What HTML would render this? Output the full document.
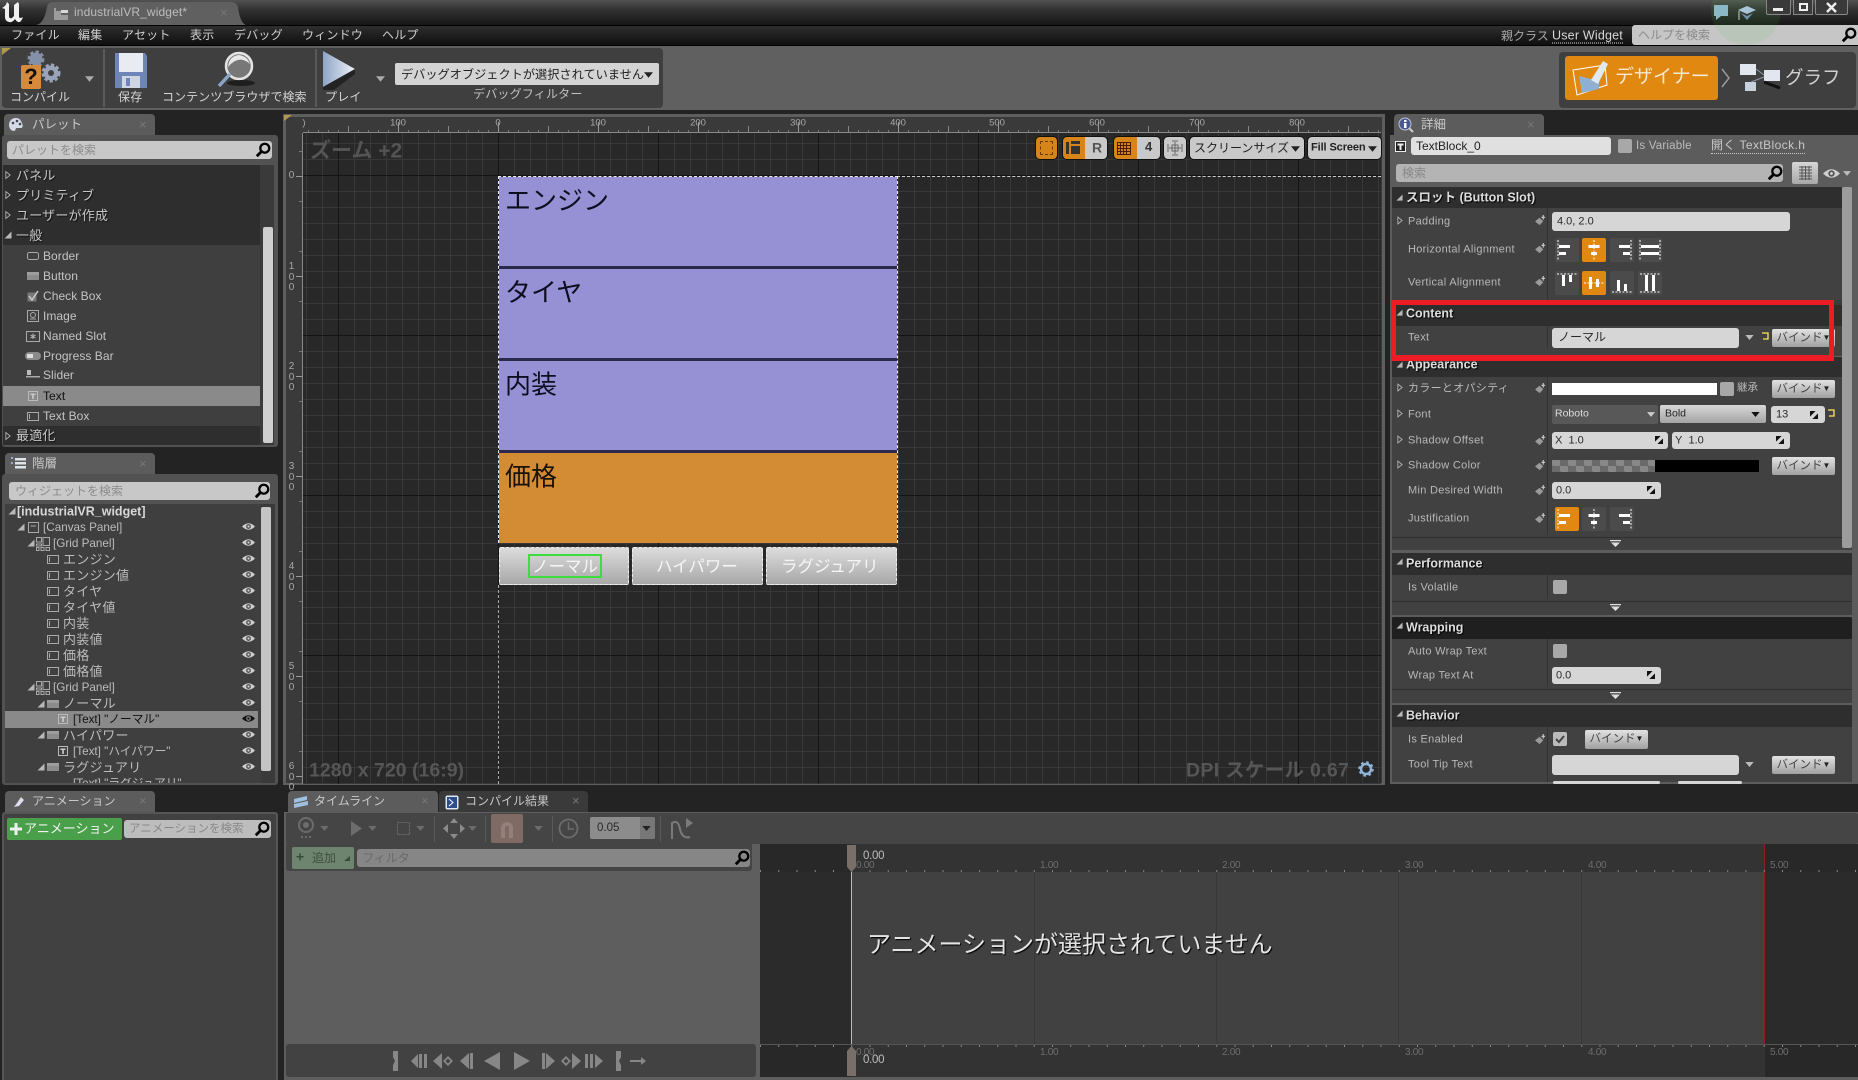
<!DOCTYPE html>
<html lang="ja"><head><meta charset="utf-8"><title>industrialVR_widget</title>
<style>
*{box-sizing:border-box;margin:0;padding:0}
html,body{width:1858px;height:1080px;overflow:hidden;background:#232323}
body{position:relative;font-family:"Liberation Sans","Noto Sans CJK JP",sans-serif;color:#c8c8c8}
div,svg{position:absolute}
.t{position:absolute;white-space:nowrap;transform:translateY(-50%);line-height:1.2}
.m{font-size:12px;color:#cfcfcf;letter-spacing:.2px}
.tab{background:#5c5c5c;border-radius:4px 4px 0 0;height:21px;top:114px}
.panel{background:#525252;border-radius:3px}
.inp{background:#c8c8c8;border-radius:3px}
.x{color:#777;font-size:13px}
.p{font-size:13px;color:#c6c6c6;letter-spacing:.2px;text-shadow:1px 1px 1px #111;transform:translateY(calc(-50% + 1px))}
.i{font-size:12px;color:#c4c4c4;letter-spacing:.05px}
.h{font-size:13px;color:#bcbcbc;letter-spacing:.25px;transform:translateY(calc(-50% + 1px))}
.h2{font-size:11.700px;letter-spacing:0}
.l{font-size:11px;color:#b8b8b8;letter-spacing:.3px;left:1408px;transform:translateY(calc(-50% + 1px))}
.s{font-size:12.5px;color:#dcdcdc;font-weight:bold;left:1406px;text-shadow:1px 1px 1px #000}
.sec{left:1392px;width:450px;background:#2e2e2e;border-radius:2px 2px 0 0}
.row{left:1392px;width:450px;background:#414141}
.f{background:#d6d6d6;border-radius:3px}
.v{font-size:11px;color:#2a2a2a}
.b{background:linear-gradient(#e2e2e2,#a0a0a0);border-radius:2px;width:63px;height:18px;color:#444;font-size:11.5px;text-align:center;line-height:18px;white-space:nowrap}
.b span{font-size:8px;color:#222;vertical-align:1px}
.ab{width:24px;height:24px;background:#4b4b4b;border-radius:2px}
.on{background:#e0880f}
.rul{font-size:9.5px;color:#a8a8a8;transform:translate(-50%,-50%)}
.vr{font-size:10px;color:#a8a8a8;left:288px;width:7px;text-align:center;line-height:10.5px;white-space:normal}
.ico{fill:none;stroke:#aaa}
.vb{background:#c9c9c9;top:136px;height:24px;border:1px solid #111;border-radius:5px;color:#222}
.tm{font-size:10px;color:#6e6e6e;letter-spacing:-.3px}
</style></head><body>
<svg width="0" height="0" style="position:absolute"><defs>
<symbol id="mag" viewBox="0 0 18 18"><circle cx="11" cy="7" r="5" fill="none" stroke="#000" stroke-width="2.6"/><path d="M7 11L2 16" stroke="#000" stroke-width="3.2"/></symbol>
<symbol id="eye" viewBox="0 0 16 10"><path d="M0 5Q8-3 16 5Q8 13 0 5Z" fill="#cfcfcf"/><circle cx="8" cy="5" r="3" fill="#555"/><circle cx="8" cy="5" r="1.3" fill="#ddd"/></symbol>
<symbol id="eyeb" viewBox="0 0 16 10"><path d="M0 5Q8-3 16 5Q8 13 0 5Z" fill="#111"/><circle cx="8" cy="5" r="3" fill="#777"/><circle cx="8" cy="5" r="1.3" fill="#111"/></symbol>
<symbol id="open" viewBox="0 0 8 8"><path d="M7.5 .5V7.5H.5Z" fill="#b8b8b8"/></symbol>
<symbol id="clo" viewBox="0 0 7 10"><path d="M1 1L6 5L1 9Z" fill="none" stroke="#b8b8b8"/></symbol>
<symbol id="key" viewBox="0 0 12 12"><path d="M0 7L5 3L9 7L5 11Z" fill="#9a9a9a"/><path d="M9 0V5M7 2.500H11" stroke="#ccc" stroke-width="1.200"/></symbol>
<symbol id="spin" viewBox="0 0 10 10"><path d="M0 0H7L0 7Z" fill="#111"/><path d="M10 10H3L10 3Z" fill="#111"/></symbol>
<symbol id="hl" viewBox="0 0 24 24"><path d="M3 2V22" stroke="#fff" stroke-dasharray="2 1.500"/><path d="M4 7H15V10H4ZM4 14H11V17H4Z" fill="#fff"/></symbol>
<symbol id="hc" viewBox="0 0 24 24"><path d="M12 2V22" stroke="#fff" stroke-dasharray="2 1.500"/><path d="M6.500 7H17.500V10H6.500ZM9 14H15V17H9Z" fill="#fff"/></symbol>
<symbol id="hr" viewBox="0 0 24 24"><path d="M21 2V22" stroke="#fff" stroke-dasharray="2 1.500"/><path d="M9 7H20V10H9ZM13 14H20V17H13Z" fill="#fff"/></symbol>
<symbol id="hf" viewBox="0 0 24 24"><path d="M2 2V22M22 2V22" stroke="#fff" stroke-dasharray="2 1.500"/><path d="M3 7H21V10H3ZM3 14H21V17H3Z" fill="#fff"/></symbol>
<symbol id="vt" viewBox="0 0 24 24"><path d="M2 3H22" stroke="#fff" stroke-dasharray="2 1.500"/><path d="M7 4H10V15H7ZM14 4H17V11H14Z" fill="#fff"/></symbol>
<symbol id="vc" viewBox="0 0 24 24"><path d="M2 12H22" stroke="#fff" stroke-dasharray="2 1.500"/><path d="M7 6H10V18H7ZM14 8H17V16H14Z" fill="#fff"/></symbol>
<symbol id="vb" viewBox="0 0 24 24"><path d="M2 21H22" stroke="#fff" stroke-dasharray="2 1.500"/><path d="M7 9H10V20H7ZM14 13H17V20H14Z" fill="#fff"/></symbol>
<symbol id="vf" viewBox="0 0 24 24"><path d="M2 3H22M2 21H22" stroke="#fff" stroke-dasharray="2 1.500"/><path d="M7 4H10V20H7ZM14 4H17V20H14Z" fill="#fff"/></symbol>
<symbol id="rect" viewBox="0 0 12 9"><rect x=".5" y=".5" width="11" height="8" fill="none" stroke="#aaa"/><path d="M2.500 2V7" stroke="#aaa"/></symbol>
<symbol id="btn" viewBox="0 0 12 8"><rect width="12" height="8" fill="#8c8c8c"/><rect width="12" height="3" fill="#9e9e9e"/></symbol>
<symbol id="ti" viewBox="0 0 10 10"><rect x=".5" y=".5" width="9" height="9" fill="none" stroke="#bbb"/><path d="M2.500 2.500H7.500V4H5.800V8H4.200V4H2.500Z" fill="#ccc"/></symbol>
<symbol id="grid" viewBox="0 0 14 14"><path d="M.5 .5H5.500V5H.5ZM7 .5H13.500V8.500H7ZM.5 7H5.500V9H.5ZM.5 10.500H3V13.500H.5ZM5 10.500H8V13.500H5ZM10 10.500H13.500V13.500H10Z" fill="none" stroke="#aaa"/></symbol>
<symbol id="arr" viewBox="0 0 10 6"><path d="M0 0H10L5 6Z"/></symbol>
</defs></svg>

<!-- title bar -->
<div style="left:0;top:0;width:1858px;height:25px;background:linear-gradient(#525252,#343434 35%,#161616)"></div>
<svg style="left:1px;top:1px" width="24" height="23" viewBox="0 0 24 23"><path d="M1 7Q5 5 6 1L8 3V15Q8 18 11 17L13 15V4L17 1L18 3V16Q19 18 22 16Q20 22 17 21Q15 20 14 18Q11 22 8 21Q4 20 4 16V8Z" fill="#f0f0f0"/></svg>
<svg style="left:36px;top:1px" width="210" height="24"><path d="M0 24Q8 23 11 6Q12 1 17 1H195Q200 1 202 6Q204 22 210 24Z" fill="#606060"/></svg>
<svg style="left:53px;top:7px" width="16" height="14" viewBox="0 0 16 14"><path d="M1 1V13H15V8H8V4H3V1Z" fill="#9c9c9c"/><path d="M8 3H15V6H8Z" fill="#d8d8d8"/></svg>
<div class="t" style="left:74px;top:11.500px;font-size:12px;color:#bdbdbd;letter-spacing:.12px">industrialVR_widget*</div>
<div class="t x" style="left:220px;top:13px">×</div>
<!-- menu -->
<div style="left:0;top:25px;width:1858px;height:21px;background:linear-gradient(#2e2e2e,#0f0f0f);border-top:1px solid #000;border-bottom:1px solid #000"></div>
<div class="t m" style="left:11px;top:35px">ファイル</div>
<div class="t m" style="left:78px;top:35px">編集</div>
<div class="t m" style="left:122px;top:35px">アセット</div>
<div class="t m" style="left:190px;top:35px">表示</div>
<div class="t m" style="left:234px;top:35px">デバッグ</div>
<div class="t m" style="left:302px;top:35px">ウィンドウ</div>
<div class="t m" style="left:382px;top:35px">ヘルプ</div>
<div class="t" style="left:1501px;top:36px;font-size:12px;color:#a8a8a8">親クラス</div>
<div class="t" style="left:1552px;top:36px;font-size:12.5px;color:#d8d8d8;border-bottom:1px dotted #ddd;line-height:14px;letter-spacing:.2px">User Widget</div>
<div class="inp" style="left:1632px;top:25px;width:226px;height:20px;background:#c6c6c6;border-radius:3px 0 0 3px"></div>
<div class="t" style="left:1638px;top:35px;font-size:12px;color:#8a8a8a">ヘルプを検索</div>
<svg style="left:1841px;top:27px" width="16" height="16"><use href="#mag"/></svg>
<div style="left:1711px;top:-25px;width:70px;height:70px;border-radius:50%;background:rgba(90,200,90,.1)"></div>
<svg style="left:1713px;top:4px" width="16" height="17" viewBox="0 0 16 17"><path d="M1 1H15V12H8L3 16V12H1Z" fill="#8ab8c6"/></svg>
<svg style="left:1738px;top:5px" width="18" height="16" viewBox="0 0 18 16"><path d="M0 5L9 1L18 5L9 9Z" fill="#a9c4d8"/><path d="M3 8L9 11L15 8L9 15Z" fill="#6f93ac"/><path d="M1 6V15" stroke="#ccc"/></svg>
<div style="left:1766px;top:0;width:25px;height:15px;background:#3a3a3a;border:1px solid #888;border-top:0;border-radius:0 0 2px 2px"></div>
<div style="left:1773px;top:8px;width:10px;height:3px;background:#eee"></div>
<div style="left:1793px;top:0;width:20px;height:15px;background:#3a3a3a;border:1px solid #888;border-top:0"></div>
<div style="left:1799px;top:3px;width:9px;height:8px;border:2px solid #eee"></div>
<div style="left:1815px;top:0;width:33px;height:15px;background:#3a3a3a;border:1px solid #888;border-top:0;border-radius:0 0 2px 2px"></div>
<svg style="left:1826px;top:2px" width="11" height="11"><path d="M1 1L10 10M10 1L1 10" stroke="#eee" stroke-width="2.400"/></svg>

<!-- toolbar strip -->
<div style="left:0;top:46px;width:1858px;height:64px;background:#606060"></div>
<div style="left:2px;top:48px;width:661px;height:60px;background:#3f3f3f;border-radius:4px"></div>
<svg style="left:2px;top:48px" width="10" height="8"><path d="M0 0H9L0 7Z" fill="#b09a48"/></svg>
<div style="left:103px;top:49px;width:2px;height:58px;background:#5a5a5a"></div>
<div style="left:315px;top:49px;width:2px;height:58px;background:#5a5a5a"></div>
<!-- compile -->
<svg style="left:20px;top:49px" width="42" height="42" viewBox="0 0 42 42"><circle cx="16" cy="10" r="6.500" fill="#8390a8" stroke="#8390a8" stroke-width="4" stroke-dasharray="3 2"/><circle cx="31" cy="24" r="7.500" fill="#9aa4b8" stroke="#9aa4b8" stroke-width="4" stroke-dasharray="3 2"/><circle cx="31" cy="24" r="3" fill="#3f3f3f"/><rect x="1" y="16" width="20" height="24" rx="2" fill="#d58a3c"/><text x="11" y="35" text-anchor="middle" font-size="22" font-weight="bold" fill="#111" font-family="Liberation Sans">?</text></svg>
<div class="t m" style="left:10px;top:97px;font-size:12px;color:#d4d4d4;letter-spacing:0">コンパイル</div>
<svg style="left:85px;top:76px" width="9" height="6" fill="#aaa"><use href="#arr"/></svg>
<!-- save -->
<svg style="left:114px;top:52px" width="34" height="37" viewBox="0 0 34 37"><path d="M1 1H31L33 4V36H1Z" fill="#6f85b8"/><rect x="5" y="1" width="24" height="19" fill="#e8ecf2"/><rect x="8" y="24" width="18" height="12" fill="#cfd6e2"/><rect x="12" y="26" width="4" height="8" fill="#6f85b8"/></svg>
<div class="t m" style="left:118px;top:97px;color:#d4d4d4">保存</div>
<!-- browse -->
<svg style="left:215px;top:50px" width="42" height="40" viewBox="0 0 42 40"><circle cx="24" cy="16" r="13" fill="#777" stroke="#e4e4e4" stroke-width="2.500"/><path d="M13 17Q24 4 35 14Q32 6 24 5Q14 6 13 17Z" fill="#e8e8e8"/><path d="M15 24L4 36" stroke="#8aa5c8" stroke-width="3.500"/><ellipse cx="26" cy="33" rx="14" ry="3" fill="#111" opacity=".7"/></svg>
<div class="t m" style="left:162px;top:97px;color:#d4d4d4;letter-spacing:.05px">コンテンツブラウザで検索</div>
<!-- play -->
<svg style="left:322px;top:50px" width="34" height="40" viewBox="0 0 34 40"><defs><linearGradient id="pg" x1="0" y1="0" x2="1" y2="0"><stop offset="0" stop-color="#8ea4c6"/><stop offset="1" stop-color="#eef2f8"/></linearGradient></defs><path d="M1 1L33 19L1 37Z" fill="url(#pg)"/><path d="M1 37L33 19V24L12 40H1Z" fill="#111" opacity=".6"/></svg>
<div class="t m" style="left:325px;top:97px;color:#d4d4d4">プレイ</div>
<svg style="left:376px;top:76px" width="9" height="6" fill="#aaa"><use href="#arr"/></svg>
<div style="left:395px;top:63px;width:264px;height:22px;background:#d4d4d4;border-radius:2px"></div>
<div class="t" style="left:401px;top:75px;font-size:12.2px;color:#222">デバッグオブジェクトが選択されていません</div>
<svg style="left:644px;top:72px" width="9" height="6" fill="#222"><use href="#arr"/></svg>
<div class="t m" style="left:473px;top:94px;color:#c0c0c0">デバッグフィルター</div>
<!-- designer -->
<div style="left:1559px;top:52px;width:297px;height:56px;background:#3f3f3f;border-radius:4px"></div>
<div style="left:1565px;top:56px;width:153px;height:44px;background:#e0880f;border-radius:3px"></div>
<svg style="left:1571px;top:57px" width="40" height="40" viewBox="0 0 40 40"><path d="M2 13L34 8L36 28L6 38Z" fill="none" stroke="#fff"/><path d="M8 19L28 24L28 32L11 36Z" fill="#8fb0d4"/><path d="M20 23L32 4L37 7L27 27Z" fill="#dfe8f4"/></svg>
<div class="t" style="left:1615px;top:78px;font-size:19px;color:#f4e8d6">デザイナー</div>
<svg style="left:1721px;top:68px" width="10" height="20"><path d="M1 1L8 10L1 19" fill="none" stroke="#9a9a9a" stroke-width="1.500"/></svg>
<svg style="left:1739px;top:62px" width="42" height="32" viewBox="0 0 42 32"><rect x="1" y="2" width="16" height="11" fill="#e2e6ee"/><rect x="25" y="8" width="16" height="11" fill="#e2e6ee"/><rect x="6" y="20" width="11" height="9" fill="#c8d0dc"/><path d="M17 7L25 13M12 20L25 15" stroke="#8a9ab0"/><path d="M25 20L41 26" stroke="#111" stroke-width="3"/></svg>
<div class="t" style="left:1785px;top:78px;font-size:18.500px;color:#d0d0d0">グラフ</div>

<!-- palette -->
<div class="tab" style="left:4px;width:151px"></div>
<svg style="left:8px;top:117px" width="16" height="15" viewBox="0 0 16 15"><path d="M8 1C3 1 1 5 1 8S3 14 6 14C8 14 7 11 9 11H13C15 11 15 8 14 6S12 1 8 1Z" fill="#d4dbe6"/><circle cx="5" cy="6" r="1.300" fill="#445"/><circle cx="9" cy="4" r="1.300" fill="#445"/><circle cx="12" cy="7" r="1.300" fill="#445"/></svg>
<div class="t" style="left:32px;top:125px;font-size:12.500px;color:#c8c8c8">パレット</div>
<div class="t x" style="left:139px;top:125px">×</div>
<div class="panel" style="left:2px;top:135px;width:276px;height:312px"></div>
<div class="inp" style="left:7px;top:141px;width:265px;height:18px"></div>
<div class="t" style="left:12px;top:150px;font-size:12px;color:#8c8c8c">パレットを検索</div>
<svg style="left:255px;top:142px" width="16" height="16"><use href="#mag"/></svg>
<div style="left:3px;top:165px;width:257px;height:280px;background:#2e2e2e"></div>
<div style="left:3px;top:245px;width:257px;height:181px;background:#3f3f3f"></div>
<div style="left:3px;top:386px;width:257px;height:20px;background:#8a8a8a"></div>
<div style="left:260px;top:165px;width:14px;height:280px;background:#3a3a3a"></div>
<div style="left:263px;top:227px;width:10px;height:216px;background:#cfcfcf;border-radius:2px"></div>
<svg style="left:5px;top:170px" width="6" height="10"><use href="#clo"/></svg><div class="t p" style="left:16px;top:175px">パネル</div>
<svg style="left:5px;top:190px" width="6" height="10"><use href="#clo"/></svg><div class="t p" style="left:16px;top:195px">プリミティブ</div>
<svg style="left:5px;top:210px" width="6" height="10"><use href="#clo"/></svg><div class="t p" style="left:16px;top:215px">ユーザーが作成</div>
<svg style="left:4px;top:231px" width="8" height="8"><use href="#open"/></svg><div class="t p" style="left:16px;top:235px">一般</div>
<svg style="left:27px;top:252px" width="12" height="8"><rect x=".5" y=".5" width="11" height="7" rx="2" fill="none" stroke="#aaa"/></svg><div class="t i" style="left:43px;top:256px">Border</div>
<svg style="left:27px;top:272px" width="12" height="8"><use href="#btn"/></svg><div class="t i" style="left:43px;top:276px">Button</div>
<svg style="left:27px;top:290px" width="12" height="12" viewBox="0 0 12 12"><rect x=".5" y="2.500" width="9" height="9" fill="#777"/><path d="M2 6L5 10L11 1" fill="none" stroke="#ccc" stroke-width="1.500"/></svg><div class="t i" style="left:43px;top:296px">Check Box</div>
<svg style="left:27px;top:310px" width="12" height="12" viewBox="0 0 12 12"><rect x=".5" y=".5" width="11" height="11" fill="none" stroke="#aaa"/><circle cx="6" cy="5" r="2.500" fill="none" stroke="#aaa"/><path d="M3 9H9" stroke="#aaa"/></svg><div class="t i" style="left:43px;top:316px">Image</div>
<svg style="left:26px;top:331px" width="14" height="11"><rect x=".5" y=".5" width="13" height="10" fill="none" stroke="#aaa"/><path d="M7 2.500V8M4.500 4L9.500 7M9.500 4L4.500 7" stroke="#bbb"/></svg><div class="t i" style="left:43px;top:336px">Named Slot</div>
<svg style="left:25px;top:352px" width="16" height="8"><rect width="16" height="8" rx="4" fill="#8a8a8a"/><rect x="2" y="2" width="6" height="4" fill="#ddd"/></svg><div class="t i" style="left:43px;top:356px">Progress Bar</div>
<svg style="left:26px;top:370px" width="14" height="9"><rect y="6" width="14" height="1.500" fill="#aaa"/><rect x="1" y="0" width="4" height="5" fill="#bbb"/></svg><div class="t i" style="left:43px;top:375px">Slider</div>
<svg style="left:28px;top:391px" width="10" height="10"><use href="#ti"/></svg><div class="t i" style="left:43px;top:396px;color:#111">Text</div>
<svg style="left:27px;top:412px" width="12" height="9"><rect x=".5" y=".5" width="11" height="8" fill="none" stroke="#aaa"/><path d="M2.500 2V7" stroke="#aaa"/></svg><div class="t i" style="left:43px;top:416px">Text Box</div>
<svg style="left:5px;top:431px" width="6" height="10"><use href="#clo"/></svg><div class="t p" style="left:16px;top:435px">最適化</div>

<!-- hierarchy -->
<div class="tab" style="left:5px;top:453px;width:150px"></div>
<svg style="left:10px;top:457px" width="16" height="13"><path d="M5 1H16V3.500H5ZM5 5H16V7.500H5ZM5 9H16V11.500H5Z" fill="#dfe4ea"/><path d="M1 1H3M1 6H3" stroke="#9ac" stroke-width="2"/></svg>
<div class="t" style="left:32px;top:464px;font-size:12.500px;color:#c8c8c8">階層</div>
<div class="t x" style="left:139px;top:464px">×</div>
<div class="panel" style="left:2px;top:474px;width:276px;height:311px"></div>
<div class="inp" style="left:9px;top:482px;width:261px;height:18px"></div>
<div class="t" style="left:15px;top:491px;font-size:12px;color:#8c8c8c">ウィジェットを検索</div>
<svg style="left:254px;top:483px" width="16" height="16"><use href="#mag"/></svg>
<div style="left:5px;top:504px;width:256px;height:279px;background:#3f3f3f"></div>
<div style="left:261px;top:504px;width:14px;height:279px;background:#3a3a3a"></div>
<div style="left:261px;top:507px;width:10px;height:264px;background:#c4c4c4;border-radius:2px"></div>
<div style="left:5px;top:711px;width:253px;height:17px;background:#8a8a8a"></div>
<svg style="left:8px;top:507px" width="8" height="8"><use href="#open"/></svg><div class="t" style="left:17px;top:512px;font-size:12.500px;font-weight:bold;color:#d8d8d8">[industrialVR_widget]</div>
<svg style="left:17px;top:523px" width="8" height="8"><use href="#open"/></svg><svg style="left:28px;top:522px" width="11" height="11"><rect x=".5" y=".5" width="10" height="10" fill="none" stroke="#aaa"/><path d="M2.500 4H8" stroke="#aaa"/></svg><div class="t h h2" style="left:43px;top:527px">[Canvas Panel]</div>
<svg style="left:27px;top:539px" width="8" height="8"><use href="#open"/></svg><svg style="left:36px;top:537px" width="14" height="14"><use href="#grid"/></svg><div class="t h h2" style="left:53px;top:543px">[Grid Panel]</div>
<svg style="left:47px;top:555px" width="12" height="9"><use href="#rect"/></svg><div class="t h" style="left:63px;top:559px">エンジン</div>
<svg style="left:47px;top:571px" width="12" height="9"><use href="#rect"/></svg><div class="t h" style="left:63px;top:575px">エンジン値</div>
<svg style="left:47px;top:587px" width="12" height="9"><use href="#rect"/></svg><div class="t h" style="left:63px;top:591px">タイヤ</div>
<svg style="left:47px;top:603px" width="12" height="9"><use href="#rect"/></svg><div class="t h" style="left:63px;top:607px">タイヤ値</div>
<svg style="left:47px;top:619px" width="12" height="9"><use href="#rect"/></svg><div class="t h" style="left:63px;top:623px">内装</div>
<svg style="left:47px;top:635px" width="12" height="9"><use href="#rect"/></svg><div class="t h" style="left:63px;top:639px">内装値</div>
<svg style="left:47px;top:651px" width="12" height="9"><use href="#rect"/></svg><div class="t h" style="left:63px;top:655px">価格</div>
<svg style="left:47px;top:667px" width="12" height="9"><use href="#rect"/></svg><div class="t h" style="left:63px;top:671px">価格値</div>
<svg style="left:27px;top:683px" width="8" height="8"><use href="#open"/></svg><svg style="left:36px;top:681px" width="14" height="14"><use href="#grid"/></svg><div class="t h h2" style="left:53px;top:687px">[Grid Panel]</div>
<svg style="left:37px;top:700px" width="8" height="8"><use href="#open"/></svg><svg style="left:47px;top:700px" width="12" height="8"><use href="#btn"/></svg><div class="t h" style="left:63px;top:703px">ノーマル</div>
<svg style="left:58px;top:714px" width="10" height="10"><use href="#ti"/></svg><div class="t h h2" style="left:73px;top:719px;color:#111">[Text] "ノーマル"</div>
<svg style="left:37px;top:731px" width="8" height="8"><use href="#open"/></svg><svg style="left:47px;top:731px" width="12" height="8"><use href="#btn"/></svg><div class="t h" style="left:63px;top:735px">ハイパワー</div>
<svg style="left:58px;top:746px" width="10" height="10"><use href="#ti"/></svg><div class="t h h2" style="left:73px;top:751px">[Text] "ハイパワー"</div>
<svg style="left:37px;top:763px" width="8" height="8"><use href="#open"/></svg><svg style="left:47px;top:763px" width="12" height="8"><use href="#btn"/></svg><div class="t h" style="left:63px;top:767px">ラグジュアリ</div>
<div style="left:5px;top:778px;width:256px;height:5px;overflow:hidden"><div class="t h h2" style="left:68px;top:5px">[Text] "ラグジュアリ"</div></div>
<svg style="left:242px;top:522px" width="13" height="9"><use href="#eye"/></svg>
<svg style="left:242px;top:538px" width="13" height="9"><use href="#eye"/></svg>
<svg style="left:242px;top:554px" width="13" height="9"><use href="#eye"/></svg>
<svg style="left:242px;top:570px" width="13" height="9"><use href="#eye"/></svg>
<svg style="left:242px;top:586px" width="13" height="9"><use href="#eye"/></svg>
<svg style="left:242px;top:602px" width="13" height="9"><use href="#eye"/></svg>
<svg style="left:242px;top:618px" width="13" height="9"><use href="#eye"/></svg>
<svg style="left:242px;top:634px" width="13" height="9"><use href="#eye"/></svg>
<svg style="left:242px;top:650px" width="13" height="9"><use href="#eye"/></svg>
<svg style="left:242px;top:666px" width="13" height="9"><use href="#eye"/></svg>
<svg style="left:242px;top:682px" width="13" height="9"><use href="#eye"/></svg>
<svg style="left:242px;top:698px" width="13" height="9"><use href="#eye"/></svg>
<svg style="left:242px;top:714px" width="13" height="9"><use href="#eyeb"/></svg>
<svg style="left:242px;top:730px" width="13" height="9"><use href="#eye"/></svg>
<svg style="left:242px;top:746px" width="13" height="9"><use href="#eye"/></svg>
<svg style="left:242px;top:762px" width="13" height="9"><use href="#eye"/></svg>

<!-- viewport -->
<div style="left:283px;top:114px;width:1102px;height:671px;background:#3a3a3a;border:3px solid #5e5e5e;border-bottom-width:2px"></div>
<svg style="left:284px;top:115px" width="9" height="7"><path d="M0 0H8L0 6Z" fill="#b09a48"/></svg>
<div style="left:303px;top:117px;width:1078px;height:16px;background-repeat:repeat-x;
background-image:linear-gradient(90deg,#999 1px,transparent 1px),linear-gradient(90deg,#888 1px,transparent 1px),linear-gradient(90deg,#777 1px,transparent 1px);
background-size:100px 10px,50px 6px,10px 2px;background-position:95px 100%,45px 100%,5px 100%;border-bottom:1px solid #8a8a8a"></div>
<div class="rul" style="position:absolute;left:304px;top:123px;white-space:nowrap">)</div>
<div class="rul" style="left:398px;top:123px">100</div>
<div class="rul" style="left:498px;top:123px">0</div>
<div class="rul" style="left:598px;top:123px">100</div>
<div class="rul" style="left:698px;top:123px">200</div>
<div class="rul" style="left:798px;top:123px">300</div>
<div class="rul" style="left:898px;top:123px">400</div>
<div class="rul" style="left:997px;top:123px">500</div>
<div class="rul" style="left:1097px;top:123px">600</div>
<div class="rul" style="left:1197px;top:123px">700</div>
<div class="rul" style="left:1297px;top:123px">800</div>
<div style="left:286px;top:133px;width:17px;height:651px;background-repeat:repeat-y;
background-image:linear-gradient(#999 1px,transparent 1px),linear-gradient(#777 1px,transparent 1px);background-size:6px 100px,3px 50px;background-position:100% 43px,100% 18px;border-right:1px solid #8a8a8a"></div>
<div class="vr" style="top:171px">0</div>
<div class="vr" style="top:262px">1 0 0</div>
<div class="vr" style="top:362px">2 0 0</div>
<div class="vr" style="top:462px">3 0 0</div>
<div class="vr" style="top:562px">4 0 0</div>
<div class="vr" style="top:662px">5 0 0</div>
<div class="vr" style="top:762px">6 0 0</div>
<div style="left:303px;top:133px;width:1078px;height:651px;background-color:#282828;
background-image:linear-gradient(90deg,#141414 1px,transparent 1px),linear-gradient(#141414 1px,transparent 1px),linear-gradient(90deg,#383838 1px,transparent 1px),linear-gradient(#383838 1px,transparent 1px);
background-size:160px 160px,160px 160px,16px 16px,16px 16px;background-position:35px 0,0 42px,3px 0,0 10px"></div>
<div style="left:897px;top:176px;width:484px;height:0;border-top:1px dashed #ccc"></div>
<div style="left:498px;top:585px;width:0;height:199px;border-left:1px dashed #aaa"></div>
<div class="t" style="left:310px;top:151px;font-size:21px;font-weight:bold;color:#545454">ズーム +2</div>
<div class="t" style="left:309px;top:771px;font-size:19.500px;font-weight:bold;color:#565656">1280 x 720 (16:9)</div>
<div class="t" style="left:1186px;top:771px;font-size:19.500px;font-weight:bold;color:#565656;letter-spacing:.3px">DPI スケール 0.67</div>
<svg style="left:1358px;top:761px" width="16" height="16" viewBox="0 0 16 16"><circle cx="8" cy="8" r="5" fill="none" stroke="#8fb4d8" stroke-width="2.500"/><circle cx="8" cy="8" r="6.500" fill="none" stroke="#8fb4d8" stroke-width="2.500" stroke-dasharray="2.500 2.600"/></svg>
<!-- widget -->
<div style="left:498px;top:176px;width:400px;height:367px;border:1px dashed #eee"></div>
<div style="left:499px;top:177px;width:398px;height:89px;background:#9690d4"></div>
<div style="left:499px;top:266px;width:398px;height:3px;background:#2c2a4a"></div>
<div style="left:499px;top:269px;width:398px;height:89px;background:#9690d4"></div>
<div style="left:499px;top:358px;width:398px;height:3px;background:#2c2a4a"></div>
<div style="left:499px;top:361px;width:398px;height:89px;background:#9690d4"></div>
<div style="left:499px;top:450px;width:398px;height:3px;background:#2c2a4a"></div>
<div style="left:499px;top:453px;width:398px;height:90px;background:#d38c33"></div>
<div class="t" style="left:505px;top:201px;font-size:26px;color:#0e0e20">エンジン</div>
<div class="t" style="left:505px;top:293px;font-size:26px;color:#0e0e20">タイヤ</div>
<div class="t" style="left:505px;top:385px;font-size:26px;color:#0e0e20">内装</div>
<div class="t" style="left:505px;top:477px;font-size:26px;color:#1a1208">価格</div>
<div style="left:499px;top:547px;width:130px;height:38px;background:linear-gradient(#dcdcdc,#a8a8a8);border:1px dashed #eee;border-radius:2px"></div>
<div style="left:632px;top:547px;width:131px;height:38px;background:linear-gradient(#dcdcdc,#a8a8a8);border:1px dashed #eee;border-radius:2px"></div>
<div style="left:766px;top:547px;width:131px;height:38px;background:linear-gradient(#dcdcdc,#a8a8a8);border:1px dashed #eee;border-radius:2px"></div>
<div style="left:528px;top:554px;width:74px;height:24px;border:2px solid #3fdc3f"></div>
<div class="t" style="left:532px;top:568px;font-size:16.500px;color:#f6f6f6">ノーマル</div>
<div class="t" style="left:656px;top:568px;font-size:16.500px;color:#f6f6f6">ハイパワー</div>
<div class="t" style="left:781px;top:568px;font-size:16.500px;color:#f6f6f6">ラグジュアリ</div>
<!-- vp toolbar -->
<div class="vb" style="left:1035px;width:23px;background:#d5851a"></div>
<div style="left:1040px;top:141px;width:13px;height:14px;border:1px dashed #6a3d05"></div>
<div class="vb" style="left:1062px;width:46px;background:linear-gradient(90deg,#d5851a 50%,#c9c9c9 50%)"></div>
<svg style="left:1066px;top:141px" width="15" height="14"><path d="M0 1H3V13H0ZM5 0H14V3H5ZM5 5H14V13H5Z" fill="#333"/></svg>
<div class="t" style="left:1092px;top:148px;font-size:14px;font-weight:bold;color:#555">R</div>
<div class="vb" style="left:1113px;width:48px;background:linear-gradient(90deg,#d5851a 50%,#c9c9c9 50%)"></div>
<svg style="left:1117px;top:142px" width="14" height="13"><path d="M.5 .5H13.500V12.500H.5ZM.5 3.500H13.500M.5 6.500H13.500M.5 9.500H13.500M3.500 .5V12.500M6.500 .5V12.500M9.500 .5V12.500" fill="none" stroke="#4a1a05"/></svg>
<div class="t" style="left:1145px;top:147px;font-size:13px;font-weight:bold;color:#333">4</div>
<div class="vb" style="left:1163px;width:24px"></div>
<svg style="left:1167px;top:140px" width="16" height="16" viewBox="0 0 16 16"><path d="M1 4V12M15 4V12M5 1H11M5 15H11M8 2V14M2 8H14" stroke="#666" fill="none"/><rect x="5" y="5" width="6" height="6" fill="none" stroke="#666"/></svg>
<div class="vb" style="left:1189px;width:116px"></div>
<div class="t" style="left:1194px;top:148px;font-size:12px;color:#222">スクリーンサイズ</div>
<svg style="left:1291px;top:146px" width="9" height="6" fill="#222"><use href="#arr"/></svg>
<div class="vb" style="left:1307px;width:75px"></div>
<div class="t" style="left:1311px;top:148px;font-size:11px;font-weight:bold;color:#222;letter-spacing:-.1px">Fill Screen</div>
<svg style="left:1368px;top:146px" width="9" height="6" fill="#222"><use href="#arr"/></svg>

<!-- details -->
<div class="tab" style="left:1394px;width:150px"></div>
<svg style="left:1398px;top:117px" width="16" height="16" viewBox="0 0 16 16"><circle cx="7" cy="7" r="6" fill="#4a5a90" stroke="#b8c4d8"/><rect x="6" y="6" width="2.500" height="5" fill="#fff"/><rect x="6" y="3" width="2.500" height="2" fill="#fff"/><path d="M11 11L15 15" stroke="#ccc" stroke-width="2"/></svg>
<div class="t" style="left:1421px;top:125px;font-size:12.500px;color:#c8c8c8">詳細</div>
<div class="t x" style="left:1527px;top:125px">×</div>
<div style="left:1390px;top:135px;width:468px;height:649px;background:#5c5c5c"></div>
<svg style="left:1395px;top:141px" width="11" height="11"><rect x=".5" y=".5" width="10" height="10" fill="#222" stroke="#eee"/><path d="M2.500 2.500H8.500V4.500H6.500V9H4.500V4.500H2.500Z" fill="#eee"/></svg>
<div class="f" style="left:1411px;top:137px;width:200px;height:18px;background:#e0e0e0"></div>
<div class="t" style="left:1416px;top:146px;font-size:12px;color:#222">TextBlock_0</div>
<div style="left:1618px;top:139px;width:14px;height:14px;background:#a8a8a8;border-radius:2px"></div>
<div class="t" style="left:1636px;top:147px;font-size:11.500px;color:#bcbcbc;letter-spacing:.2px">Is Variable</div>
<div class="t" style="left:1711px;top:146px;font-size:12px;color:#c8c8c8;border-bottom:1px dotted #ccc;letter-spacing:.4px;line-height:15px">開く TextBlock.h</div>
<div class="inp" style="left:1396px;top:164px;width:387px;height:18px;background:#b4b4b4"></div>
<div class="t" style="left:1402px;top:173px;font-size:12px;color:#888">検索</div>
<svg style="left:1767px;top:165px" width="16" height="16"><use href="#mag"/></svg>
<div style="left:1792px;top:162px;width:26px;height:22px;background:linear-gradient(#d6d6d6,#a8a8a8);border-radius:2px"></div>
<svg style="left:1799px;top:166px" width="13" height="14"><path d="M0 1H13M0 4H13M0 7H13M0 10H13M0 13H13M3 0V14M6.500 0V14M10 0V14" stroke="#555" fill="none"/></svg>
<svg style="left:1823px;top:168px" width="17" height="11"><use href="#eye"/></svg>
<svg style="left:1843px;top:171px" width="8" height="5" fill="#bbb"><use href="#arr"/></svg>

<!-- sections -->
<div class="row" style="top:187px;height:175px"></div>
<div class="row" style="top:326px;height:224px;width:460px"></div>
<div class="row" style="top:553px;height:62px;width:460px"></div>
<div class="row" style="top:617px;height:86px;width:460px"></div>
<div class="row" style="top:705px;height:77px;width:460px"></div>
<div style="left:1392px;top:300px;width:460px;height:5px;background:#3c3c3c"></div>
<div style="left:1547px;top:208px;width:1px;height:92px;background:#333"></div>
<div style="left:1547px;top:326px;width:1px;height:23px;background:#333"></div>
<div style="left:1547px;top:377px;width:1px;height:158px;background:#333"></div>
<div style="left:1547px;top:575px;width:1px;height:24px;background:#333"></div>
<div style="left:1547px;top:639px;width:1px;height:48px;background:#333"></div>
<div style="left:1547px;top:727px;width:1px;height:55px;background:#333"></div>
<div class="sec" style="top:187px;height:21px;width:450px"></div>
<svg style="left:1396px;top:194px" width="7" height="7"><use href="#open"/></svg>
<div class="t s" style="top:198px;font-size:12.500px">スロット (Button Slot)</div>
<svg style="left:1397px;top:216px" width="6" height="9"><use href="#clo"/></svg><div class="t l" style="top:221px">Padding</div>
<svg style="left:1535px;top:215px" width="11" height="11"><use href="#key"/></svg>
<div class="f" style="left:1552px;top:212px;width:238px;height:19px"></div><div class="t v" style="left:1557px;top:221.500px">4.0, 2.0</div>
<div class="t l" style="top:249px">Horizontal Alignment</div>
<svg style="left:1535px;top:243px" width="11" height="11"><use href="#key"/></svg>
<div class="ab" style="left:1555px;top:238px"><svg width="24" height="24"><use href="#hl"/></svg></div>
<div class="ab on" style="left:1582px;top:238px"><svg width="24" height="24"><use href="#hc"/></svg></div>
<div class="ab" style="left:1610px;top:238px"><svg width="24" height="24"><use href="#hr"/></svg></div>
<div class="ab" style="left:1638px;top:238px"><svg width="24" height="24"><use href="#hf"/></svg></div>
<div class="t l" style="top:282px">Vertical Alignment</div>
<svg style="left:1535px;top:276px" width="11" height="11"><use href="#key"/></svg>
<div class="ab" style="left:1555px;top:271px"><svg width="24" height="24"><use href="#vt"/></svg></div>
<div class="ab on" style="left:1582px;top:271px"><svg width="24" height="24"><use href="#vc"/></svg></div>
<div class="ab" style="left:1610px;top:271px"><svg width="24" height="24"><use href="#vb"/></svg></div>
<div class="ab" style="left:1638px;top:271px"><svg width="24" height="24"><use href="#vf"/></svg></div>

<div class="sec" style="top:305px;height:21px;width:460px"></div>
<svg style="left:1396px;top:309px" width="7" height="7"><use href="#open"/></svg><div class="t s" style="top:314px">Content</div>
<div class="t l" style="top:337px">Text</div>
<div class="f" style="left:1552px;top:328px;width:187px;height:20px"></div><div class="t" style="left:1558px;top:337px;font-size:12px;color:#2a2a2a">ノーマル</div>
<svg style="left:1745px;top:335px" width="9" height="5" fill="#bbb"><use href="#arr"/></svg>
<svg style="left:1761px;top:332px" width="8" height="9"><path d="M1 1H7V7H2" fill="none" stroke="#ffe85a" stroke-width="1.300"/></svg>
<div class="b" style="left:1772px;top:329px;width:63px">バインド<span>▼</span></div>

<div style="left:1392px;top:349px;width:460px;height:8px;background:#414141;border-bottom:1px solid #666"></div>
<div class="sec" style="top:357px;height:20px;width:450px"></div>
<svg style="left:1396px;top:361px" width="7" height="7"><use href="#open"/></svg><div class="t s" style="top:365px">Appearance</div>
<svg style="left:1397px;top:383px" width="6" height="9"><use href="#clo"/></svg><div class="t l" style="top:388px">カラーとオパシティ</div>
<svg style="left:1535px;top:383px" width="11" height="11"><use href="#key"/></svg>
<div style="left:1552px;top:383px;width:165px;height:12px;background:#fff"></div>
<div style="left:1720px;top:382px;width:14px;height:14px;background:#a8a8a8;border-radius:2px"></div>
<div class="t" style="left:1737px;top:388px;font-size:10.500px;color:#b8b8b8">継承</div>
<div class="b" style="left:1772px;top:380px">バインド<span>▼</span></div>
<svg style="left:1397px;top:409px" width="6" height="9"><use href="#clo"/></svg><div class="t l" style="top:414px">Font</div>
<div style="left:1552px;top:405px;width:106px;height:19px;background:#585858;border-radius:2px"></div><div class="t" style="left:1555px;top:414px;font-size:10.500px;color:#ddd">Roboto</div>
<svg style="left:1647px;top:412px" width="8" height="5" fill="#ccc"><use href="#arr"/></svg>
<div style="left:1660px;top:405px;width:106px;height:18px;background:linear-gradient(#d8d8d8,#a4a4a4);border-radius:2px"></div><div class="t" style="left:1665px;top:414px;font-size:10.500px;color:#222">Bold</div>
<svg style="left:1751px;top:412px" width="9" height="5" fill="#111"><use href="#arr"/></svg>
<div class="f" style="left:1771px;top:406px;width:54px;height:17px"></div><div class="t v" style="left:1776px;top:414.500px">13</div>
<svg style="left:1810px;top:411px" width="8" height="8"><use href="#spin"/></svg>
<svg style="left:1827px;top:409px" width="8" height="9"><path d="M1 1H7V7H2" fill="none" stroke="#ffe85a" stroke-width="1.300"/></svg>
<svg style="left:1397px;top:435px" width="6" height="9"><use href="#clo"/></svg><div class="t l" style="top:440px">Shadow Offset</div>
<svg style="left:1535px;top:435px" width="11" height="11"><use href="#key"/></svg>
<div class="f" style="left:1552px;top:432px;width:116px;height:17px"></div><div class="t v" style="left:1555px;top:440.500px">X&nbsp;&nbsp;1.0</div><svg style="left:1655px;top:436px" width="8" height="8"><use href="#spin"/></svg>
<div class="f" style="left:1672px;top:432px;width:118px;height:17px"></div><div class="t v" style="left:1675px;top:440.500px">Y&nbsp;&nbsp;1.0</div><svg style="left:1776px;top:436px" width="8" height="8"><use href="#spin"/></svg>
<svg style="left:1397px;top:460px" width="6" height="9"><use href="#clo"/></svg><div class="t l" style="top:465px">Shadow Color</div>
<svg style="left:1535px;top:460px" width="11" height="11"><use href="#key"/></svg>
<div style="left:1552px;top:460px;width:207px;height:12px;background:#000"></div>
<div style="left:1552px;top:460px;width:103px;height:12px;background-color:#888;background-image:linear-gradient(45deg,#6a6a6a 25%,transparent 25%,transparent 75%,#6a6a6a 75%),linear-gradient(45deg,#6a6a6a 25%,transparent 25%,transparent 75%,#6a6a6a 75%);background-size:16px 12px;background-position:0 0,8px 6px"></div>
<div class="b" style="left:1772px;top:457px">バインド<span>▼</span></div>
<div class="t l" style="top:490px">Min Desired Width</div>
<svg style="left:1535px;top:485px" width="11" height="11"><use href="#key"/></svg>
<div class="f" style="left:1552px;top:482px;width:109px;height:17px"></div><div class="t v" style="left:1556px;top:490.500px">0.0</div><svg style="left:1647px;top:486px" width="8" height="8"><use href="#spin"/></svg>
<div class="t l" style="top:518px">Justification</div>
<svg style="left:1535px;top:513px" width="11" height="11"><use href="#key"/></svg>
<div class="ab on" style="left:1555px;top:507px"><svg width="24" height="24"><use href="#hl"/></svg></div>
<div class="ab" style="left:1582px;top:507px"><svg width="24" height="24"><use href="#hc"/></svg></div>
<div class="ab" style="left:1610px;top:507px"><svg width="24" height="24"><use href="#hr"/></svg></div>
<div style="left:1392px;top:537px;width:450px;height:1px;background:#2e2e2e"></div>
<svg style="left:1610px;top:540px" width="11" height="7"><path d="M0 0H11V1.200H0ZM1 2.500H10L5.500 7Z" fill="#ddd"/></svg>
<div style="left:1842px;top:187px;width:10px;height:361px;background:#9c9c9c;border-radius:2px"></div>

<div class="sec" style="top:553px;height:22px;width:460px"></div>
<svg style="left:1396px;top:558px" width="7" height="7"><use href="#open"/></svg><div class="t s" style="top:564px">Performance</div>
<div class="t l" style="top:587px">Is Volatile</div>
<div style="left:1553px;top:580px;width:14px;height:14px;background:#a8a8a8;border-radius:2px"></div>
<div style="left:1392px;top:601px;width:460px;height:1px;background:#2e2e2e"></div>
<svg style="left:1610px;top:604px" width="11" height="7"><path d="M0 0H11V1.200H0ZM1 2.500H10L5.500 7Z" fill="#ddd"/></svg>

<div class="sec" style="top:617px;height:22px;width:460px;background:#1f1f1f"></div>
<svg style="left:1396px;top:622px" width="7" height="7"><use href="#open"/></svg><div class="t s" style="top:628px">Wrapping</div>
<div class="t l" style="top:651px">Auto Wrap Text</div>
<div style="left:1553px;top:644px;width:14px;height:14px;background:#a8a8a8;border-radius:2px"></div>
<div class="t l" style="top:675px">Wrap Text At</div>
<div class="f" style="left:1552px;top:667px;width:109px;height:17px"></div><div class="t v" style="left:1556px;top:675.500px">0.0</div><svg style="left:1647px;top:671px" width="8" height="8"><use href="#spin"/></svg>
<div style="left:1392px;top:689px;width:460px;height:1px;background:#2e2e2e"></div>
<svg style="left:1610px;top:692px" width="11" height="7"><path d="M0 0H11V1.200H0ZM1 2.500H10L5.500 7Z" fill="#ddd"/></svg>

<div class="sec" style="top:705px;height:22px;width:460px"></div>
<svg style="left:1396px;top:710px" width="7" height="7"><use href="#open"/></svg><div class="t s" style="top:716px">Behavior</div>
<div class="t l" style="top:739px">Is Enabled</div>
<svg style="left:1535px;top:734px" width="11" height="11"><use href="#key"/></svg>
<div style="left:1553px;top:732px;width:14px;height:14px;background:#bbb;border-radius:2px"></div>
<svg style="left:1555px;top:734px" width="10" height="10"><path d="M1 5L4 8L9 2" fill="none" stroke="#444" stroke-width="2"/></svg>
<div class="b" style="left:1585px;top:730px;height:19px">バインド<span>▼</span></div>
<div class="t l" style="top:764px">Tool Tip Text</div>
<div class="f" style="left:1552px;top:755px;width:187px;height:20px"></div>
<svg style="left:1745px;top:762px" width="9" height="5" fill="#bbb"><use href="#arr"/></svg>
<div class="b" style="left:1772px;top:756px">バインド<span>▼</span></div>
<div class="f" style="left:1553px;top:781px;width:107px;height:3px"></div>
<div class="f" style="left:1678px;top:781px;width:64px;height:3px"></div>
<!-- red highlight -->
<div style="left:1391px;top:300px;width:443px;height:61px;border:5px solid #ed1c24;border-bottom-width:6px"></div>

<!-- animation panel -->
<div class="tab" style="left:5px;top:791px;width:150px"></div>
<svg style="left:12px;top:796px" width="13" height="13"><path d="M2 11L5 7L9 1L12 4L7 10Z" fill="#dde"/></svg>
<div class="t" style="left:32px;top:801px;font-size:12px;color:#c8c8c8">アニメーション</div>
<div class="t x" style="left:139px;top:801px">×</div>
<div style="left:2px;top:812px;width:276px;height:268px;background:#414141;border:2px solid #555;border-bottom:0;border-radius:3px 3px 0 0"></div>
<div style="left:7px;top:818px;width:115px;height:22px;background:#4aa04a;border-radius:2px"></div>
<svg style="left:10px;top:823px" width="12" height="12"><path d="M4.500 0H7.500V4.500H12V7.500H7.500V12H4.500V7.500H0V4.500H4.500Z" fill="#f0f0f0"/></svg>
<div class="t" style="left:24px;top:829px;font-size:13px;color:#f0f0f0">アニメーション</div>
<div class="inp" style="left:124px;top:820px;width:147px;height:18px;background:#bdbdbd"></div>
<div class="t" style="left:129px;top:830px;font-size:11.500px;color:#888">アニメーションを検索</div>
<svg style="left:254px;top:821px" width="16" height="16"><use href="#mag"/></svg>

<!-- timeline -->
<div class="tab" style="left:288px;top:791px;width:150px"></div>
<div class="tab" style="left:439px;top:791px;width:149px;background:#3a3a3a"></div>
<svg style="left:293px;top:796px" width="16" height="12"><path d="M1 3L14 0V4L1 7ZM1 8L15 5V9L1 12Z" fill="#9ec0e0"/></svg>
<div class="t" style="left:314px;top:801px;font-size:12px;color:#c8c8c8">タイムライン</div>
<div class="t x" style="left:421px;top:801px">×</div>
<svg style="left:445px;top:795px" width="14" height="15"><rect x=".5" y=".5" width="13" height="14" rx="2" fill="#dfe7f2"/><rect x="2" y="2" width="10" height="11" fill="#2d4e8a"/><path d="M4 4L8 7.500L4 11" stroke="#fff" fill="none"/></svg>
<div class="t" style="left:465px;top:801px;font-size:12px;color:#c8c8c8">コンパイル結果</div>
<div class="t x" style="left:572px;top:801px">×</div>
<div style="left:284px;top:812px;width:1574px;height:268px;background:#5e5e5e"></div>
<div style="left:286px;top:813px;width:1572px;height:31px;background:#454545;border-radius:2px"></div>
<!-- timeline toolbar icons -->
<svg style="left:296px;top:815px" width="24" height="28" viewBox="0 0 24 28"><circle cx="10" cy="10" r="7" fill="none" stroke="#6c6c6c" stroke-width="2"/><circle cx="10" cy="10" r="3" fill="#6c6c6c"/><path d="M5 22H7M9 22H11M13 22H15" stroke="#6c6c6c" stroke-width="2"/></svg>
<svg style="left:320px;top:826px" width="9" height="5" fill="#6c6c6c"><use href="#arr"/></svg>
<svg style="left:350px;top:820px" width="13" height="17"><path d="M1 1L12 8.500L1 16Z" fill="#6c6c6c"/></svg>
<svg style="left:368px;top:826px" width="9" height="5" fill="#6c6c6c"><use href="#arr"/></svg>
<svg style="left:397px;top:822px" width="13" height="13"><rect x=".5" y=".5" width="12" height="12" fill="none" stroke="#6c6c6c" stroke-dasharray="2 1"/></svg>
<svg style="left:416px;top:826px" width="9" height="5" fill="#6c6c6c"><use href="#arr"/></svg>
<div style="left:434px;top:816px;width:1px;height:26px;background:#5a5a5a"></div>
<svg style="left:443px;top:818px" width="22" height="21"><path d="M11 0L15 5H7ZM11 21L7 16H15ZM0 10.500L5 6V15ZM22 10.500L17 6V15Z" fill="#8a8a8a"/></svg>
<svg style="left:468px;top:826px" width="9" height="5" fill="#6c6c6c"><use href="#arr"/></svg>
<div style="left:485px;top:816px;width:1px;height:26px;background:#5a5a5a"></div>
<div style="left:491px;top:814px;width:32px;height:29px;background:#7f6b63;border-radius:2px"></div>
<svg style="left:498px;top:820px" width="18" height="18"><path d="M3 18V8A6 6 0 0 1 15 8V18H11V8A2 2 0 0 0 7 8V18Z" fill="#94807a"/></svg>
<svg style="left:534px;top:826px" width="9" height="5" fill="#6c6c6c"><use href="#arr"/></svg>
<div style="left:552px;top:816px;width:1px;height:26px;background:#5a5a5a"></div>
<svg style="left:558px;top:818px" width="21" height="21"><circle cx="10.500" cy="10.500" r="9" fill="none" stroke="#6c6c6c" stroke-width="1.800"/><path d="M10.500 4V11H16" fill="none" stroke="#6c6c6c" stroke-width="1.500"/></svg>
<div style="left:590px;top:817px;width:65px;height:22px;background:#8c8c8c;border-radius:2px"></div>
<div style="left:640px;top:817px;width:15px;height:22px;background:#777;border-radius:0 2px 2px 0"></div>
<div class="t" style="left:597px;top:829px;font-size:11.500px;color:#2a2a2a">0.05</div>
<svg style="left:642px;top:826px" width="9" height="5" fill="#222"><use href="#arr"/></svg>
<div style="left:660px;top:816px;width:1px;height:26px;background:#5a5a5a"></div>
<svg style="left:670px;top:817px" width="24" height="24"><path d="M2 22V6Q8 2 10 12T20 20" fill="none" stroke="#7a7a7a" stroke-width="2"/><path d="M16 1L23 6L16 11Z" fill="#7a7a7a"/></svg>
<!-- filter row -->
<div style="left:286px;top:844px;width:466px;height:27px;background:#454545;border-radius:0 0 3px 3px"></div>
<div style="left:292px;top:847px;width:62px;height:22px;background:#6e846e;border-radius:2px"></div>
<div class="t" style="left:296px;top:857px;font-size:14px;font-weight:bold;color:#3a4a3a">+</div>
<div class="t" style="left:312px;top:858px;font-size:12px;color:#3e4e3e">追加</div>
<svg style="left:344px;top:856px" width="6" height="5"><path d="M6 0V5H0Z" fill="#3a4a3a"/></svg>
<div class="inp" style="left:357px;top:849px;width:393px;height:18px;background:#868686"></div>
<div class="t" style="left:362px;top:858px;font-size:12px;color:#6a6a6a">フィルタ</div>
<svg style="left:734px;top:850px" width="16" height="16"><use href="#mag"/></svg>
<!-- track -->
<div style="left:760px;top:844px;width:1098px;height:28px;background:#333"></div>
<div style="left:760px;top:844px;width:91px;height:28px;background:#282828"></div>
<div style="left:1765px;top:844px;width:93px;height:28px;background:#282828"></div>
<div style="left:760px;top:872px;width:1098px;height:172px;background:#414141"></div>
<div style="left:760px;top:872px;width:91px;height:172px;background:#2b2b2b"></div>
<div style="left:1765px;top:872px;width:93px;height:172px;background:#2b2b2b"></div>
<div style="left:1034px;top:872px;width:1px;height:172px;background:#383838"></div>
<div style="left:1216px;top:872px;width:1px;height:172px;background:#383838"></div>
<div style="left:1398px;top:872px;width:1px;height:172px;background:#383838"></div>
<div style="left:1581px;top:872px;width:1px;height:172px;background:#383838"></div>
<div style="left:851px;top:872px;width:1px;height:172px;background:#bbb"></div>
<div style="left:1764px;top:844px;width:1px;height:233px;background:#8a2020"></div>
<div style="left:760px;top:868px;width:1098px;height:4px;background-image:linear-gradient(90deg,#888 1px,transparent 1px);background-size:18.250px 2px;background-position:0 100%;background-repeat:repeat-x"></div>
<div style="left:760px;top:1044px;width:1098px;height:33px;background:#333;border-top:1px solid #555"></div>
<div style="left:760px;top:1044px;width:91px;height:33px;background:#282828;border-top:1px solid #555"></div>
<div style="left:1765px;top:1044px;width:93px;height:33px;background:#282828;border-top:1px solid #555"></div>
<div style="left:760px;top:1045px;width:1098px;height:3px;background-image:linear-gradient(90deg,#888 1px,transparent 1px);background-size:18.250px 2px;background-repeat:repeat-x"></div>
<div class="t tm" style="left:856px;top:866px">0.00</div><div class="t tm" style="left:1040px;top:866px">1.00</div><div class="t tm" style="left:1222px;top:866px">2.00</div><div class="t tm" style="left:1405px;top:866px">3.00</div><div class="t tm" style="left:1588px;top:866px">4.00</div><div class="t tm" style="left:1770px;top:866px">5.00</div>
<div class="t tm" style="left:856px;top:1053px">0.00</div><div class="t tm" style="left:1040px;top:1053px">1.00</div><div class="t tm" style="left:1222px;top:1053px">2.00</div><div class="t tm" style="left:1405px;top:1053px">3.00</div><div class="t tm" style="left:1588px;top:1053px">4.00</div><div class="t tm" style="left:1770px;top:1053px">5.00</div>
<div class="t" style="left:863px;top:857px;font-size:11.500px;color:#bdbdbd;letter-spacing:-.3px">0.00</div>
<div class="t" style="left:863px;top:1061px;font-size:11.500px;color:#bdbdbd;letter-spacing:-.3px">0.00</div>
<svg style="left:846px;top:845px" width="11" height="27"><path d="M1 0H10V22L5.500 27L1 22Z" fill="#7a6e68"/></svg>
<svg style="left:846px;top:1046px" width="11" height="30"><path d="M5.500 0L10 5V30H1V5Z" fill="#7a6e68"/></svg>
<div class="t" style="left:867px;top:946px;font-size:24px;color:#e4e4e4;text-shadow:1px 1px 1px #000">アニメーションが選択されていません</div>
<!-- transport -->
<div style="left:286px;top:1044px;width:470px;height:33px;background:#424242;border-radius:3px"></div>
<svg style="left:390px;top:1049px" width="270" height="24" viewBox="0 0 270 24" fill="#878787"><path d="M3 2H8V22H3V16L5 12L3 8Z"/><path d="M21 12L28 5V19ZM29 5H32V19H29ZM34 5H37V19H34Z"/><path d="M43 12L52 4V20Z"/><path d="M53 12L58 7L63 12L58 17ZM55.500 12L58 14.500L60.500 12L58 9.500Z" fill-rule="evenodd"/><path d="M70 12L79 4V20ZM80 4H83V20H80Z"/><path d="M94 12L110 3V21Z"/><path d="M124 3L140 12L124 21Z"/><path d="M152 4H155V20H152ZM156 4L165 12L156 20Z"/><path d="M171 12L176 7L181 12L176 17ZM173.500 12L176 14.500L178.500 12L176 9.500Z" fill-rule="evenodd"/><path d="M182 4L191 12L182 20Z"/><path d="M195 5H198V19H195ZM200 5H203V19H200ZM205 5L213 12L205 19Z"/><path d="M226 2H231V8L229 12L231 16V22H226Z"/><path d="M240 11H251V8L256 12L251 16V13H240Z"/></svg>
</body></html>
